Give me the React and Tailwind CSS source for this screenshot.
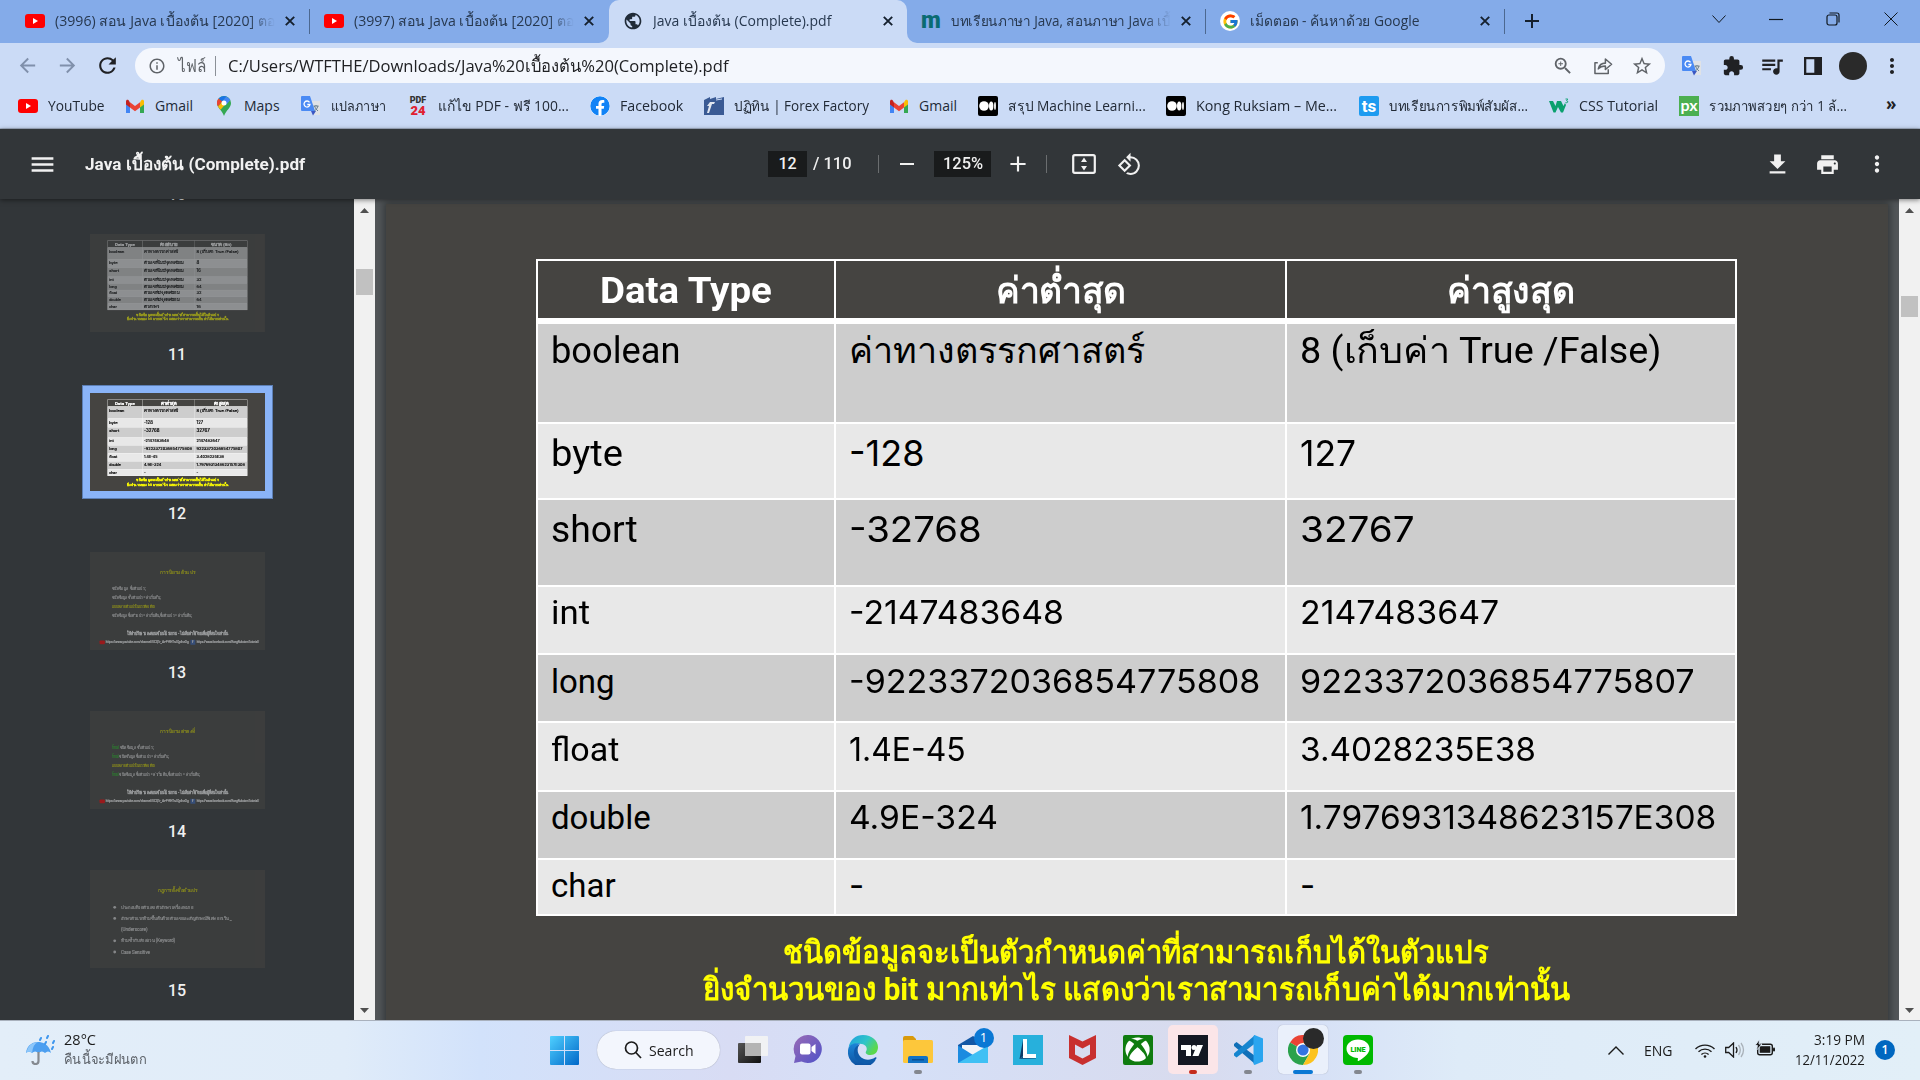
import React, { useLayoutEffect, useRef } from "react";
import {
  MdArrowBack, MdArrowForward, MdRefresh, MdPublic, MdAdd, MdInfoOutline, MdZoomIn, MdStarBorder,
  MdExtension, MdQueueMusic, MdMoreVert, MdMenu, MdRemove, MdRotate90DegreesCcw, MdFileDownload, MdPrint,
} from "react-icons/md";
import { FcGoogle } from "react-icons/fc";
import { FaXbox, FaFacebook } from "react-icons/fa";

/* Single line of text condensed or expanded to an exact width. */
function Fit({ w, className = "", children }) {
  const ref = useRef(null);
  useLayoutEffect(() => {
    const el = ref.current;
    const natural = el.offsetWidth;
    if (natural > 0) el.style.transform = `scaleX(${w / natural})`;
  }, [w, children]);
  return (
    <span className={"block shrink-0 " + className} style={{ width: w }}>
      <span ref={ref} className="inline-block origin-left whitespace-pre">{children}</span>
    </span>
  );
}

/* ---------- logos ---------- */
const YouTube = () => (
  <svg viewBox="0 0 20 14" className="h-[14px] w-5"><rect width="20" height="14" rx="3" fill="#f00" /><path d="M8 4v6l5-3z" fill="#fff" /></svg>
);
const Gmail = () => (
  <svg viewBox="0 0 20 15" className="h-[15px] w-5">
    <path d="M1 2v12h4V5z" fill="#4285f4" /><path d="M15 5v9h4V2z" fill="#34a853" />
    <path d="M1 2.5v3L5 8.6V3.4L3.6 1.3C2.4.3 1 1 1 2.5z" fill="#c5221f" />
    <path d="M5 3.2v5.2l5 3.8 5-3.8V3.2L10 7z" fill="#ea4335" />
    <path d="M15 3.2v5.4l4-3.1v-3c0-1.5-1.5-2.2-2.7-1.2z" fill="#fbbc04" />
  </svg>
);
const Maps = () => (
  <svg viewBox="0 0 14 20" className="h-5 w-[14px]">
    <path d="M7 0a7 7 0 0 0-7 7c0 5 5 7 7 13 2-6 7-8 7-13a7 7 0 0 0-7-7z" fill="#34a853" />
    <path d="M7 0a7 7 0 0 0-5.4 2.5L5 5.5l4.500-5A7 7 0 0 0 7 0z" fill="#1a73e8" />
    <path d="M1.600 2.500A7 7 0 0 0 1 10.500L5.200 5.500z" fill="#ea4335" />
    <path d="M1 10.500c.6 1 1.500 2 2.500 3.200L9.500 7 5 6z" fill="#fbbc04" />
    <path d="M9.300.4 5 5.500l4.500 3L13.300 4A7 7 0 0 0 9.300.4z" fill="#4285f4" />
    <circle cx="7" cy="7" r="2.500" fill="#fff" />
  </svg>
);
const Translate = () => (
  <svg viewBox="0 0 20 20" className="h-5 w-5">
    <path d="M9 5h10v14H12z" fill="#dfe2e6" /><path d="M10 15h5l-3 4.500z" fill="#3b57c4" />
    <path d="M1 0h8l5 15H1q-1 0-1-1V1q0-1 1-1z" fill="#4a8af4" />
    <path d="M8.500 6.300A3 3 0 1 0 9 8.500H6.300" fill="none" stroke="#fff" strokeWidth="1.300" />
    <path d="M12.500 10h5M15 9v1m-1.600 0q1 3 3.600 5m0-5q-.6 3-3.600 5" fill="none" stroke="#5f7686" strokeWidth=".9" />
  </svg>
);
const Pdf24 = () => (
  <span className="flex w-5 flex-col items-center font-['Roboto'] font-black">
    <span className="text-[9px] leading-[9px] text-[#333]">PDF</span>
    <span className="text-[13px] leading-[11px] text-[#e02030]">24</span>
  </span>
);
const Forex = () => (
  <svg viewBox="0 0 20 18" className="h-[18px] w-5"><path d="M0 3l6-3v2l6-2v2l8-2v18H0z" fill="#3a5a94" /><path d="M3 16l2-7H3l3-4h5l-1 2H8L5 16z" fill="#fff" opacity=".85" /><path d="M12 3l6-1" stroke="#cbdbf6" /></svg>
);
const Medium = () => (
  <svg viewBox="0 0 20 20" className="h-5 w-5"><rect width="20" height="20" rx="2" /><circle cx="6" cy="10" r="4.800" fill="#fff" /><ellipse cx="13.200" cy="10" rx="2.200" ry="4.500" fill="#fff" /><ellipse cx="17" cy="10" rx=".9" ry="4" fill="#fff" /></svg>
);
const Ts = () => <span className="flex h-5 w-5 items-center justify-center rounded-[2px] bg-[#1d9bf0] font-['Roboto'] text-[17px] leading-none font-bold text-white">ts</span>;
const W3 = () => (
  <svg viewBox="0 0 20 16" className="h-4 w-5"><path d="M0 3h4l2.500 5L8 3h4l2.500 5L16 5l1 2-3 7.500h-2L9 9l-2.500 5.500h-2z" fill="#0aa06e" /><path d="M16.500 1h2.300L17.500 2.700q1.800.2 1.200 1.500-.6 1-2.200.3" fill="none" stroke="#0aa06e" strokeWidth=".9" /></svg>
);
const Px = () => <span className="flex h-5 w-5 items-center justify-center bg-[#4caf50] pb-[3px] font-['Lato'] text-[16px] leading-none font-bold text-white">px</span>;
const Marcus = () => <span className="flex w-5 justify-center font-['Roboto'] text-[23px] leading-[20px] font-black text-[#0a6b72]">m</span>;
const GoogleDisc = () => <span className="flex h-5 w-5 items-center justify-center rounded-full bg-white"><FcGoogle size={17} /></span>;
const CloseX = () => (
  <svg viewBox="0 0 10 10" className="h-[10px] w-[10px]"><path d="M.8.8l8.400 8.400M9.200.8.8 9.200" stroke="#15202e" strokeWidth="1.900" /></svg>
);

/* ---------- browser chrome ---------- */
function Tab({ icon, text, w, divider = true }) {
  return (
    <div className="flex h-[42px] w-[299px] items-center pl-[14px]">
      <span className="flex w-5 shrink-0 justify-center">{icon}</span>
      <div className="ml-[10px] w-[220px] overflow-hidden [mask-image:linear-gradient(90deg,#000_88%,transparent)]">
        <Fit w={w} className="text-[14px] leading-[26px] text-[#27384f]">{text}</Fit>
      </div>
      <span className="ml-1 flex w-[22px] justify-center"><CloseX /></span>
      {divider && <span className="ml-auto h-[25px] w-px bg-[#4c6890]" />}
    </div>
  );
}

function TabStrip() {
  return (
    <div className="flex h-[43px] shrink-0 bg-[#cbdbf6]">
      <div className="flex rounded-br-[10px] bg-[#84abe9] pl-[11px]">
        <Tab icon={<YouTube />} w={220} text="(3996) สอน Java เบื้องต้น [2020] ตอ" />
        <Tab icon={<YouTube />} w={220} text="(3997) สอน Java เบื้องต้น [2020] ตอ" divider={false} />
      </div>
      <div className="w-[298px] bg-[linear-gradient(#84abe9_50%,#cbdbf6_50%)]">
        <div className="h-[43px] rounded-t-[10px] bg-[#cbdbf6]">
          <Tab icon={<MdPublic size={20} className="text-[#202b38]" />} w={178} text="Java เบื้องต้น (Complete).pdf" divider={false} />
        </div>
      </div>
      <div className="flex flex-1 rounded-bl-[10px] bg-[#84abe9]">
        <Tab icon={<Marcus />} w={220} text="บทเรียนภาษา Java, สอนภาษา Java เบื้" />
        <Tab icon={<GoogleDisc />} w={169} text="เม็ดตอด - ค้นหาด้วย Google" />
        <MdAdd size={24} className="mt-[9px] ml-[15px] text-[#15202e]" />
        <div className="mt-[9px] ml-auto flex h-5 items-center text-[#101820]">
          <svg viewBox="0 0 14 8" className="mr-[43px] h-2 w-[14px]" fill="none" stroke="currentColor"><path d="M.5.5 7 7.500 13.500.5" /></svg>
          <svg viewBox="0 0 14 14" className="mr-[43px] h-[14px] w-[14px]" fill="none" stroke="currentColor" strokeWidth="1.200"><path d="M0 7.500h14" /></svg>
          <svg viewBox="0 0 14 14" className="mr-[44px] h-[14px] w-[14px]" fill="none" stroke="currentColor" strokeWidth="1.200"><rect x="1" y="3" width="10" height="10" rx="2" /><path d="M3.500 1H11q2 0 2 2v7.500" /></svg>
          <svg viewBox="0 0 14 14" className="mr-[22px] h-[14px] w-[14px]" fill="none" stroke="currentColor"><path d="M.5.5l13 13M13.500.5l-13 13" /></svg>
        </div>
      </div>
    </div>
  );
}

function AddressBar() {
  return (
    <div className="flex h-[45px] shrink-0 items-center pl-4 text-[#202124]">
      <MdArrowBack size={23} className="text-[#8090ab]" />
      <MdArrowForward size={23} className="ml-[17px] text-[#8090ab]" />
      <MdRefresh size={25} className="ml-[16px]" />
      <div className="ml-[15px] flex h-[35px] w-[1530px] items-center rounded-full bg-[#f4f7fd] pl-[13px]">
        <MdInfoOutline size={18} className="text-[#5f6368]" />
        <Fit w={28} className="ml-[12px] text-[17px] leading-[32px] text-[#5f6368]">ไฟล์</Fit>
        <span className="mr-2 ml-[9px] h-5 w-px bg-[#8b9097]" />
        <Fit w={500} className="ml-1 text-[17px] leading-[32px]">C:/Users/WTFTHE/Downloads/Java%20เบื้องต้น%20(Complete).pdf</Fit>
        <div className="ml-auto flex items-center gap-[18px] pr-[12px] text-[#5f6368]">
          <MdZoomIn size={22} className="mr-[2px]" />
          <svg viewBox="0 0 20 20" className="h-[19px] w-[19px]" fill="none" stroke="currentColor" strokeWidth="1.600"><path d="M4 7H1v11.500h14V14M4.500 13.500Q6 7.500 12 7.500V3.200l6.500 5.500-6.500 5.500V10.500q-5 0-7.500 3z" strokeLinejoin="round" /></svg>
          <MdStarBorder size={22} />
        </div>
      </div>
      <div className="ml-[17px] flex items-center">
        <Translate />
        <MdExtension size={22} className="ml-[20px]" />
        <MdQueueMusic size={26} className="ml-[15px]" />
        <svg viewBox="0 0 18 18" className="ml-[19px] h-[18px] w-[18px]"><path d="M0 0h18v18H0zM2.300 2.300v13.400h8V2.300z" fill="currentColor" fillRule="evenodd" /></svg>
        <span className="ml-[17px] h-7 w-7 rounded-full bg-[#2a2a2a]" />
        <MdMoreVert size={24} className="ml-[13px]" />
      </div>
    </div>
  );
}

const bookmarks = [
  [<YouTube />, "YouTube", 57, 107], [<Gmail />, "Gmail", 38, 89], [<Maps />, "Maps", 36, 87],
  [<Translate />, "แปลภาษา", 55, 107], [<Pdf24 />, "แก้ไข PDF - ฟรี 100...", 131, 182],
  [<FaFacebook size={20} className="rounded-full bg-white text-[#1183f6]" />, "Facebook", 63, 114],
  [<Forex />, "ปฏิทิน | Forex Factory", 135, 185], [<Gmail />, "Gmail", 38, 89],
  [<Medium />, "สรุป Machine Learni...", 138, 188], [<Medium />, "Kong Ruksiam – Me...", 141, 193],
  [<Ts />, "บทเรียนการพิมพ์สัมผัส...", 139, 190], [<W3 />, "CSS Tutorial", 79, 130], [<Px />, "รวมภาพสวยๆ กว่า 1 ล้...", 138, 178],
];

function Bookmarks() {
  return (
    <div className="flex h-[41px] shrink-0 items-start border-b border-[#a9b6cc] pl-[18px]">
      {bookmarks.map(([icon, text, w, total], i) => (
        <div key={i} className="flex h-9 shrink-0 items-center" style={{ width: total }}>
          <span className="flex w-5 shrink-0 justify-center">{icon}</span>
          <Fit w={w} className="ml-[10px] text-[14px] leading-[26px] text-[#222a36]">{text}</Fit>
        </div>
      ))}
      <span className="mt-1 ml-[29px] text-[17px] leading-[24px] font-bold text-[#202124]">»</span>
    </div>
  );
}

function PdfToolbar() {
  return (
    <div className="relative z-10 flex h-[70px] shrink-0 items-center bg-[#323639] font-['Roboto'] text-[#f1f1f1] shadow-[0_1px_5px_rgba(0,0,0,0.5)]">
      <MdMenu size={29} className="ml-[28px]" />
      <Fit w={220} className="ml-[28px] text-[17px] leading-[30px] font-bold">Java เบื้องต้น (Complete).pdf</Fit>
      <div className="ml-[463px] flex items-center text-[16px] font-medium">
        <span className="flex h-[26px] w-[39px] items-center justify-center bg-[#191b1c]">12</span>
        <Fit w={39} className="ml-[6px]">/ 110</Fit>
        <span className="ml-[26px] h-[18px] w-px bg-[#6b6e70]" />
        <MdRemove size={24} className="ml-[16px]" />
        <span className="ml-[15px] flex h-[26px] w-[57px] items-center justify-center bg-[#191b1c]"><Fit w={40}>125%</Fit></span>
        <MdAdd size={26} className="ml-[14px]" />
        <span className="ml-[15px] h-[18px] w-px bg-[#6b6e70]" />
        <svg viewBox="0 0 24 20" className="ml-[25px] h-5 w-6"><rect x="1.200" y="1.200" width="21.600" height="17.600" rx="1.500" fill="none" stroke="currentColor" strokeWidth="2.200" /><path d="M12 3.500 15 8H9zM12 16.500 15 12H9z" fill="currentColor" /></svg>
        <MdRotate90DegreesCcw size={25} className="ml-[21px]" />
      </div>
      <MdFileDownload size={27} className="ml-auto" />
      <MdPrint size={25} className="ml-[24px]" />
      <MdMoreVert size={26} className="mr-[30px] ml-[24px]" />
    </div>
  );
}

/* ---------- slides ---------- */
const limits = {
  head: [["Data Type", 172], ["ค่าต่ำสุด", 130], ["ค่าสูงสุด", 128]],
  rows: [
    [98, 7, ["boolean", 130], ["ค่าทางตรรกศาสตร์", 296], ["8 (เก็บค่า True /False)", 361]],
    [74, 10, ["byte", 72], ["-128", 75], ["127", 56]],
    [85, 10, ["short", 87], ["-32768", 133], ["32767", 115]],
    [66, 6, ["int", 39], ["-2147483648", 215], ["2147483647", 199]],
    [66, 7, ["long", 64], ["-9223372036854775808", 411], ["9223372036854775807", 395]],
    [67, 7, ["float", 68], ["1.4E-45", 117], ["3.4028235E38", 236]],
    [66, 6, ["double", 100], ["4.9E-324", 149], ["1.7976931348623157E308", 416]],
    [54, 6, ["char", 65], ["-", 15], ["-", 15]],
  ],
};
const sizes = {
  head: [["Data Type", 171], ["คำอธิบาย", 155], ["ขนาด (Bit)", 180]],
  rows: [
    [97, 7, ["boolean", 129], ["ค่าทางตรรกศาสตร์", 296], ["8 (เก็บค่า True /False)", 361]],
    [69, 10, ["byte", 71], ["ตัวเลขที่ไม่มีจุดทศนิยม", 345], ["8", 24]],
    [75, 8, ["short", 86], ["ตัวเลขที่ไม่มีจุดทศนิยม", 345], ["16", 36]],
    [57, 6, ["int", 39], ["ตัวเลขที่ไม่มีจุดทศนิยม", 345], ["32", 44]],
    [54, 3, ["long", 64], ["ตัวเลขที่ไม่มีจุดทศนิยม", 345], ["64", 44]],
    [57, 5, ["float", 67], ["ตัวเลขที่มีจุดทศนิยม", 305], ["32", 44]],
    [54, 3, ["double", 99], ["ตัวเลขที่มีจุดทศนิยม", 305], ["64", 44]],
    [54, 3, ["char", 65], ["ตัวอักษร", 130], ["16", 36]],
  ],
};

const cols = "grid grid-cols-[296px_449px_1fr] gap-x-[2px]";

function TableSlide({ data }) {
  return (
    <div className="flex h-[843px] w-[1502px] flex-col bg-[#454441] pt-[55px] pl-[150px] font-['Roboto'] text-black">
      <div className="flex w-[1201px] flex-col gap-[2px] bg-white p-[2px]">
        <div className={cols + " mb-1 h-[57px] grid-rows-[57px] text-[36px] leading-[60px] font-bold text-white"}>
          {data.head.map(([t, w]) => (
            <div key={t} className="flex h-[57px] justify-center bg-[#454441]"><Fit w={w}>{t}</Fit></div>
          ))}
        </div>
        {data.rows.map(([h, pad, ...cells], i) => (
          <div key={i} className={cols} style={{ height: h }}>
            {cells.map(([t, w], j) => {
              const digits = j > 0 && /^[-\d.E]+$/.test(t);
              return (
                <div key={j} className={(i % 2 ? "bg-[#e8e8e8]" : "bg-[#cdcdcd]") + " pl-[13px] leading-[40px] " + (i < 3 ? "text-[36px]" : "text-[33px]") + (digits ? " font-['Inter']" : "")} style={{ paddingTop: digits ? pad - 1 : pad }}>
                  <Fit w={w}>{t}</Fit>
                </div>
              );
            })}
          </div>
        ))}
      </div>
      <div className="mt-[18px] ml-[-152px] flex flex-col items-center text-[31px] leading-[37px] font-bold text-[#ff0]">
        <Fit w={706}>ชนิดข้อมูลจะเป็นตัวกำหนดค่าที่สามารถเก็บได้ในตัวแปร</Fit>
        <Fit w={867}>ยิ่งจำนวนของ bit มากเท่าไร แสดงว่าเราสามารถเก็บค่าได้มากเท่านั้น</Fit>
      </div>
    </div>
  );
}

function SyntaxSlide({ title, keyword, widths }) {
  const kw = keyword ? <span className="text-[#2bb52b]">{keyword} </span> : null;
  return (
    <div className="flex h-[843px] w-[1506px] flex-col bg-[#454441] pt-[135px] font-['Roboto'] text-[38px] text-[#d8d8d8]">
      <Fit w={300} className="mx-auto text-[46px] leading-[80px] text-[#d9d900]">{title}</Fit>
      <div className="mt-[56px] flex flex-col pl-[190px] leading-[78px]">
        <Fit w={widths[0]}>{kw}ชนิดข้อมูล  ชื่อตัวแปร ;</Fit>
        <Fit w={widths[1]}>{kw}ชนิดข้อมูล ชื่อตัวแปร = ค่าเริ่มต้น;</Fit>
        <Fit w={370} className="text-[#d9d900]">แบบหลายตัวแปรในบรรทัดเดียว</Fit>
        <Fit w={widths[2]}>{kw}ชนิดข้อมูล ชื่อตัวแปร = ค่าเริ่มต้น,ชื่อตัวแปร = ค่าเริ่มต้น;</Fit>
      </div>
      <Fit w={870} className="mx-auto mt-[75px] text-[40px] leading-[80px] font-bold text-white">ให้คำปรึกษาและสอนเขียนโปรแกรม - ไม่เสียค่าใช้จ่ายเพื่อผู้ที่สนใจเท่านั้น</Fit>
      <div className="mt-[16px] flex items-center pl-[82px] text-[24px] leading-[40px] text-white">
        <span className="mr-2 h-[32px] w-[46px] rounded-lg bg-[#f00]" />
        <Fit w={710} className="underline decoration-[5px]">https://www.youtube.com/channel/UCQ1r_4x-P-RHTnJQp6vrOg</Fit>
        <span className="mr-3 ml-4 flex h-[42px] w-[42px] items-center justify-center bg-[#3b66b8] font-bold">f</span>
        <Fit w={535} className="underline decoration-[5px]">https://www.facebook.com/KongRuksiamTutorial/</Fit>
      </div>
    </div>
  );
}

function RulesSlide() {
  const rules = [["ประกอบด้วยตัวเลข ตัวอักษร เครื่องหมาย", 620, 1], ["อักษรตัวแรกห้ามขึ้นต้นด้วยตัวเลขและสัญลักษณ์พิเศษ ยกเว้น _", 950, 1], ["(Underscore)", 228, 0], ["ห้ามซ้ำกับคำสงวน (Keyword)", 465, 1], ["Case Sensitive", 248, 1]];
  return (
    <div className="flex h-[843px] w-[1506px] flex-col bg-[#454441] pt-[135px] font-['Roboto'] text-[38px] text-[#d8d8d8]">
      <Fit w={345} className="mx-auto text-[46px] leading-[80px] text-[#d9d900]">กฎการตั้งชื่อตัวแปร</Fit>
      <div className="mt-[57px] flex flex-col pl-[200px] leading-[96px]">
        {rules.map(([t, w, dot]) => (
          <div key={t} className="flex items-center">
            <span className={"mr-[42px] h-6 w-6 rounded-full " + (dot ? "bg-[#d8d8d8]" : "bg-transparent")} />
            <Fit w={w}>{t}</Fit>
          </div>
        ))}
      </div>
    </div>
  );
}

function Thumb({ n, active, children }) {
  return (
    <div className="flex h-[159px] shrink-0 flex-col items-center">
      <div className={"border p-[7px] " + (active ? "border-[#5c7fb5] bg-[#8ab4f8]" : "border-transparent")}>
        <div className="h-[98px] w-[175px] overflow-hidden bg-[#323639]">
          <div className={"origin-top-left scale-[0.1165] [-webkit-text-stroke:1.5px_currentColor] " + (active ? "" : "opacity-50")}>{children}</div>
        </div>
      </div>
      <span className="mt-[4px] text-[16px] leading-[22px] font-medium text-[#f1f1f1]">{n}</span>
    </div>
  );
}

function Scrollbar({ thumb }) {
  return (
    <div className="flex h-full w-[21px] shrink-0 flex-col items-center bg-[#f1f1f1]">
      <svg viewBox="0 0 9 5" className="mt-[9px] h-[5px] w-[9px]"><path d="M4.500 0 9 5H0z" fill="#505050" /></svg>
      <span className={"w-[17px] bg-[#c1c1c1] " + thumb} />
      <svg viewBox="0 0 9 5" className="mt-auto mb-[7px] h-[5px] w-[9px]"><path d="M4.500 5 9 0H0z" fill="#505050" /></svg>
    </div>
  );
}

function Viewer() {
  return (
    <div className="flex h-[821px] shrink-0 overflow-hidden bg-[#525659]">
      <div className="flex w-[354px] shrink-0 flex-col items-center overflow-hidden bg-[#323639] font-['Roboto']">
        <span className="mt-[-15px] mb-[34px] h-[8px] text-[16px] leading-[22px] font-medium text-[#f1f1f1]">10</span>
        <Thumb n="11"><TableSlide data={sizes} /></Thumb>
        <Thumb n="12" active><TableSlide data={limits} /></Thumb>
        <Thumb n="13"><SyntaxSlide title="การนิยามตัวแปร" widths={[290, 415, 685]} /></Thumb>
        <Thumb n="14"><SyntaxSlide title="การนิยามค่าคงที่" keyword="final" widths={[360, 485, 755]} /></Thumb>
        <Thumb n="15"><RulesSlide /></Thumb>
      </div>
      <Scrollbar thumb="mt-[56px] h-[26px]" />
      <div className="flex-1 overflow-hidden pt-[5px] pl-[11px]">
        <div className="w-[1502px] shadow-[0_0_7px_2px_rgba(40,44,46,0.75)]"><TableSlide data={limits} /></div>
      </div>
      <Scrollbar thumb="mt-[83px] h-[21px]" />
    </div>
  );
}

/* ---------- taskbar ---------- */
const Umbrella = () => (
  <svg viewBox="0 0 30 30" className="h-[30px] w-[30px]">
    <path d="M0 18C1 9 8 7 12 7s11 2 13 11q-3-3-6 0-3-3-6.500 0Q9 15 6 18q-3-3-6 0z" fill="#4d9ff0" /><path d="M6 18Q7 9 12 7q-9 0-12 11 3-3 6 0z" fill="#8cc6fa" />
    <path d="M12.500 17v9q0 3-3 3t-3-3" fill="none" stroke="#858a91" strokeWidth="2.200" />
    <g stroke="#3f97ee" strokeWidth="2" strokeLinecap="round"><path d="M15 3l-1 2M22 1l-1 2M20 7l-1 2M28 6l-1 2M27 12l-1 2" /></g>
  </svg>
);
const Windows = () => (
  <svg viewBox="0 0 29 29" className="h-[29px] w-[29px]"><defs><linearGradient id="win" x2="1" y2="1"><stop stopColor="#4fd0ff" /><stop offset="1" stopColor="#0067c8" /></linearGradient></defs><path d="M0 1q0-1 1-1h13v14H0zM15 0h13q1 0 1 1v13H15zM0 15h14v14H1q-1 0-1-1zM15 15h14v13q0 1-1 1H15z" fill="url(#win)" /></svg>
);
const TaskView = () => (
  <svg viewBox="0 0 30 28" className="h-7 w-[30px]"><defs><linearGradient id="tvw" x2="1" y2="1"><stop stopColor="#555" /><stop offset="1" stopColor="#111" /></linearGradient></defs><rect y="7" width="23" height="20" rx="1" fill="url(#tvw)" /><rect x="7" width="23" height="20" rx="1" fill="#f4f4f4" opacity=".9" /><rect x="7" y="7" width="16" height="13" fill="#b4b4b4" /></svg>
);
const Chat = () => (
  <svg viewBox="0 0 29 29" className="h-[29px] w-[29px]"><defs><linearGradient id="cht" x2="1" y2="1"><stop stopColor="#9a6bb5" /><stop offset="1" stopColor="#4f52c8" /></linearGradient></defs><path d="M14.500 0a14 14 0 1 1-6 26.500L1 28l1.500-7A14 14 0 0 1 14.500 0z" fill="url(#cht)" /><rect x="7" y="8.500" width="10.500" height="11" rx="2" fill="#fff" /><path d="M18.500 12l4-3v10l-4-3z" fill="#fff" /></svg>
);
const Edge = () => (
  <svg viewBox="0 0 30 30" className="h-[30px] w-[30px]">
    <defs><linearGradient id="ed1" x2="1" y2=".5"><stop stopColor="#1d9de0" /><stop offset=".6" stopColor="#2fc5c8" /><stop offset="1" stopColor="#5bd84b" /></linearGradient><linearGradient id="ed2" x2="0" y2="1"><stop stopColor="#1b86d8" /><stop offset="1" stopColor="#0d4f9e" /></linearGradient></defs>
    <path d="M.5 13C2 4 8 0 15 0c9 0 15 6 15 12 0 5-3 8-7.500 8-4 0-5.500-2-4.500-3.500 2-3 0-7-4.500-7.500C7 8 2 10 .5 13z" fill="url(#ed1)" />
    <path d="M.5 13C2 9 7 7.500 12 8.500 7 11 6 20 11 25c4 3.500 10 3 14.500 0 2-1.200 2.500-.5 1.500 1A15 15 0 0 1 .5 13z" fill="url(#ed2)" />
    <path d="M12 9c-4 4-3 12 4 15 4 1.500 8 .5 11-1.500 1.500-1 2 .3 1 1.500-3 4-8 5-12 5C9 27 5 22 6 16c.5-3 3-6 6-7z" fill="#0f5cab" />
  </svg>
);
const Explorer = () => (
  <svg viewBox="0 0 30 28" className="h-7 w-[30px]"><path d="M0 2q0-2 2-2h8l3 3v5H0z" fill="#d99a0b" /><rect y="4" width="30" height="23" rx="1.500" fill="#fdc73b" /><path d="M5 27v-5q0-2 2-2h16q2 0 2 2v5z" fill="#1272c4" /><rect x="9" y="23" width="12" height="1.500" fill="#0b4f92" /></svg>
);
const Mail = () => (
  <svg viewBox="0 0 30 27" className="h-[27px] w-[30px]"><path d="M0 9 15 0l15 9v4H0z" fill="#1257a5" /><path d="M4 9h22v6l-11 6-11-6z" fill="#f1f4f8" /><path d="M0 9.500 15 19v8H0z" fill="#1b8be0" /><path d="M30 9.500 0 27h30z" fill="#3fc0f4" /></svg>
);
const Learn = () => (
  <svg viewBox="0 0 30 30" className="h-[30px] w-[30px]"><rect width="30" height="30" fill="#27b0dc" /><path d="M10 5 6.500 24 11 20z" fill="#0c3a66" /><path d="M6.500 24 11 20h12v-1 4.500z" fill="#12507f" /><path d="M10 4h4v15h9v4H10z" fill="#fff" /></svg>
);
const Shield = () => (
  <svg viewBox="0 0 27 30" className="h-[30px] w-[27px]"><path d="M0 0 13.500 6.500 27 0v23l-13.500 7L0 23zM6 9.500v10l7.500 4 7.500-4v-10l-7.500 4z" fill="#c8302f" fillRule="evenodd" /></svg>
);
const Xbox = () => <span className="flex h-[30px] w-[30px] items-center justify-center rounded-[2px] bg-[#107c10]"><FaXbox size={25} className="text-white" /></span>;
const Trading = () => (
  <svg viewBox="0 0 30 30" className="h-[30px] w-[30px]"><rect width="30" height="30" fill="#131722" /><path d="M3 10h10v11H8v-6H3zM19 10h6l-4.500 11h-6z" fill="#fff" /><circle cx="16" cy="12.500" r="2.500" fill="#fff" /></svg>
);
const Code = () => (
  <svg viewBox="0 0 30 30" className="h-[30px] w-[30px]"><path d="M1 9l2.500-2L22 21v8L1 11z" fill="#0f6fb8" /><path d="M1 20.500l2.500 2L22 8.500V0L1 18.500z" fill="#1585cf" /><path d="M21.500 0 30 3.500v23L21.500 30l-1-1V1z" fill="#2aa5ef" /></svg>
);
const Chrome = () => (
  <svg viewBox="0 0 30 30" className="h-[30px] w-[30px]"><path d="M15 15 2 7.500a15 15 0 0 1 26 0z" fill="#ea4335" /><path d="M15 15 2 7.500A15 15 0 0 0 15 30l6.500-11.300z" fill="#2ba24c" /><path d="M15 15l6.500 3.700L15 30A15 15 0 0 0 28 7.500H15z" fill="#fcc31e" /><circle cx="15" cy="15" r="7" fill="#fff" /><circle cx="15" cy="15" r="5.600" fill="#3374e0" /></svg>
);
const Line = () => (
  <svg viewBox="0 0 30 30" className="h-[30px] w-[30px]"><rect width="30" height="30" rx="4" fill="#00b900" /><path d="M15 4.500c6.500 0 11.500 4 11.500 9.200 0 4.500-5 8.800-11 12.300-.9.400-.8-.3-.7-1l.1-2C8.500 22.500 3.500 19 3.500 13.700 3.500 8.500 8.500 4.500 15 4.500z" fill="#fff" /><text x="15" y="16.600" textAnchor="middle" fontFamily="Roboto" fontWeight="900" fontSize="7.200" fill="#00b900">LINE</text></svg>
);

const apps = [
  [<TaskView />], [<Chat />], [<Edge />], [<Explorer />, "bg-[#83878f] w-2"],
  [<Mail />, "", "", <span className="absolute top-[3px] right-[4px] flex h-5 w-5 items-center justify-center rounded-full bg-[#0a78d4] text-[13px] text-white">1</span>],
  [<Learn />], [<Shield />], [<Xbox />], [<Trading />, "bg-[#c42b1c] w-2", "bg-[#fbe5e8]"], [<Code />, "bg-[#83878f] w-2"],
  [<Chrome />, "bg-[#0a78d4] w-5", "bg-[#eaf0fb] shadow-[0_0_1px_rgba(0,0,0,0.3)]", <span className="absolute top-[3px] right-[4px] h-[21px] w-[21px] rounded-full bg-[#2a2a2a]" />],
  [<Line />, "bg-[#83878f] w-2"],
];

function Taskbar() {
  return (
    <div className="flex h-[60px] shrink-0 items-center border-t border-[#a9b1bd] bg-[linear-gradient(90deg,#e3eef9_0%,#e0ecf9_18%,#d2e2fb_25%,#d8dcf4_38%,#d5e0f8_46%,#d8dbee_62%,#d6e0f6_68%,#deebf8_76%,#e2eff8_100%)] pb-[1px] text-[#1b1b1b]">
      <span className="ml-[26px]"><Umbrella /></span>
      <div className="ml-2 flex flex-col pb-[3px] text-[15px] leading-[20px]">
        <Fit w={32}>28°C</Fit>
        <Fit w={82} className="text-[14px] text-[#5c6168]">คืนนี้จะมีฝนตก</Fit>
      </div>
      <span className="ml-[404px]"><Windows /></span>
      <div className="ml-[18px] flex h-[38px] w-[123px] items-center rounded-full bg-[#f3f6fd] pl-[27px] shadow-[0_0_1px_rgba(0,0,0,0.35)]">
        <svg viewBox="0 0 18 18" className="h-[18px] w-[18px]" fill="none" stroke="#1b1b1b" strokeWidth="1.700"><circle cx="7.500" cy="7" r="6" /><path d="M11.800 11.500 17 17" /></svg>
        <Fit w={45} className="ml-[7px] text-[15px]">Search</Fit>
      </div>
      <div className="ml-[5px] flex">
        {apps.map(([icon, dot, bg, badge], i) => (
          <div key={i} className="flex h-[50px] w-[55px] justify-center">
            <div className={"relative flex h-[49px] w-[50px] items-center justify-center rounded-[5px] " + (bg || "")}>
              {icon}{badge}
              {dot && <span className={"absolute bottom-0 h-1 rounded-full " + dot} />}
            </div>
          </div>
        ))}
      </div>
      <div className="ml-auto flex items-center">
        <svg viewBox="0 0 16 9" className="h-[9px] w-4" fill="none" stroke="#1b1b1b" strokeWidth="1.400"><path d="M.5 8.500 8 1l7.500 7.500" /></svg>
        <Fit w={29} className="ml-[20px] text-[15px]">ENG</Fit>
        <svg viewBox="0 0 20 15" className="ml-[22px] h-[15px] w-5" fill="none" stroke="#1b1b1b" strokeWidth="1.400"><path d="M.5 6a13.500 13.500 0 0 1 19 0M3.500 8.800a9.300 9.300 0 0 1 13 0M6.400 11.600a5.200 5.200 0 0 1 7.200 0" /><circle cx="10" cy="13.500" r="1.300" fill="#1b1b1b" stroke="none" /></svg>
        <svg viewBox="0 0 20 16" className="ml-[10px] h-4 w-5" fill="none" stroke="#1b1b1b" strokeWidth="1.300"><path d="M.7 5.500h3L8.500 1v14l-4.800-4.500h-3z" /><path d="M11 5q2 3 0 6" /><path d="M13.500 3q3.600 5 0 10M16 1q5 7 0 14" stroke="#a9b1b9" /></svg>
        <svg viewBox="0 0 20 17" className="mb-[5px] ml-[10px] h-[17px] w-5"><rect x="2.700" y="5.200" width="14.600" height="10.600" rx="2" fill="none" stroke="#1b1b1b" strokeWidth="1.400" /><rect x="4.700" y="7.200" width="10.600" height="6.600" fill="#1b1b1b" /><rect x="18" y="8.500" width="2" height="4" rx="1" fill="#1b1b1b" /><path d="M4.800 0 0 6.500h2.500L1.300 11.500 7 5H4z" fill="#1b1b1b" stroke="#e0ecf9" strokeWidth=".9" /></svg>
        <div className="ml-[20px] flex w-[70px] flex-col items-end pb-[3px] text-[15px] leading-[20px]">
          <Fit w={51}>3:19 PM</Fit>
          <Fit w={70}>12/11/2022</Fit>
        </div>
        <span className="mr-[25px] ml-[10px] flex h-5 w-5 items-center justify-center rounded-full bg-[#0067c0] text-[12px] font-semibold text-white">1</span>
      </div>
    </div>
  );
}

export default function App() {
  return (
    <div className="flex h-[1080px] w-[1920px] flex-col overflow-hidden bg-[#cbdbf6] font-['Open_Sans','Noto_Sans',sans-serif]">
      <TabStrip />
      <AddressBar />
      <Bookmarks />
      <PdfToolbar />
      <Viewer />
      <Taskbar />
    </div>
  );
}
